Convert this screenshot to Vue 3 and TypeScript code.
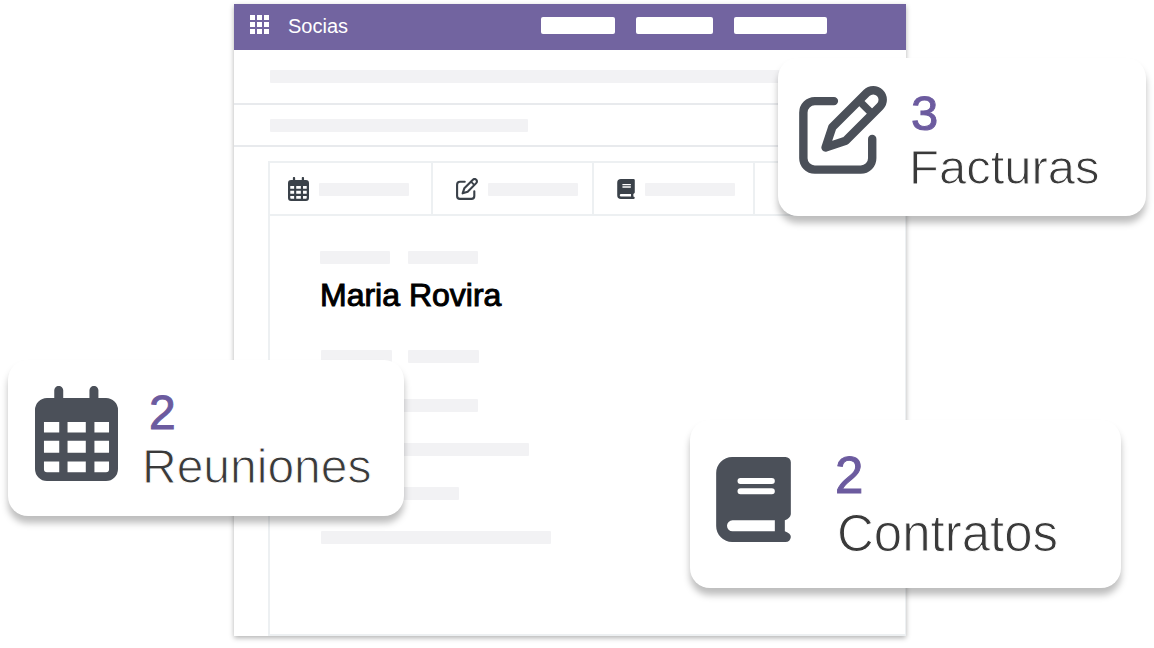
<script setup lang="ts">
import { h, type FunctionalComponent } from 'vue'

type IconName = 'calendar' | 'edit' | 'book'

interface Summary {
  key: string
  icon: IconName
  count: number
  label: string
}

const summaries: Summary[] = [
  { key: 'invoices', icon: 'edit', count: 3, label: 'Facturas' },
  { key: 'meetings', icon: 'calendar', count: 2, label: 'Reuniones' },
  { key: 'contracts', icon: 'book', count: 2, label: 'Contratos' },
]

const tabs: { icon: IconName; label: string }[] = [
  { icon: 'calendar', label: 'Reuniones' },
  { icon: 'edit', label: 'Facturas' },
  { icon: 'book', label: 'Contratos' },
]

const Icon: FunctionalComponent<{ name: IconName }> = ({ name }) => {
  if (name === 'calendar') {
    return h('svg', { viewBox: '0 0 250 286', fill: 'currentColor', 'aria-hidden': 'true' }, [
      h('path', {
        'fill-rule': 'evenodd',
        d:
          'M58 36V13a13.5 13.5 0 0 1 27 0V36H164V13a13.5 13.5 0 0 1 27 0V36H214a36 36 0 0 1 36 36V250a36 36 0 0 1-36 36H36a36 36 0 0 1-36-36V72a36 36 0 0 1 36-36Z' +
          'M27 108H73V140H27ZM98 108H153V140H98ZM179 108H223V140H179Z' +
          'M27 165H73V201H27ZM98 165H153V201H98ZM179 165H223V201H179Z' +
          'M27 227H73V260H36a9 9 0 0 1-9-9ZM98 227H153V260H98ZM179 227H223V251a9 9 0 0 1-9 9H179Z',
      }),
    ])
  }
  if (name === 'edit') {
    return h(
      'svg',
      {
        viewBox: '0 0 262 262',
        fill: 'none',
        stroke: 'currentColor',
        'stroke-width': 25,
        'stroke-linecap': 'round',
        'stroke-linejoin': 'round',
        'aria-hidden': 'true',
      },
      [
        h('path', { d: 'M104 45H47a34 34 0 0 0-34 34V215a34 34 0 0 0 34 34H184a34 34 0 0 0 34-34V158' }),
        h('path', { d: 'M79 183L99 123L201 21A28 28 0 0 1 241 61L139 163Z' }),
        h('path', { 'stroke-linecap': 'butt', 'stroke-width': 22, d: 'M179 44L219 84' }),
      ],
    )
  }
  return h('svg', { viewBox: '0 0 224 255', fill: 'currentColor', 'aria-hidden': 'true' }, [
    h('path', {
      'fill-rule': 'evenodd',
      d:
        'M48 0H208a16 16 0 0 1 16 16V172Q222 184 206 190V223Q224 230 224 240Q222 255 208 255H48a48 48 0 0 1-48-48V48a48 48 0 0 1 48-48Z' +
        'M73 63a9 9 0 0 0 0 18H167a9 9 0 0 0 0-18ZM73 94a9 9 0 0 0 0 18H167a9 9 0 0 0 0-18Z' +
        'M49 190a16 16 0 0 0 0 33H176V190Z',
    }),
  ])
}
Icon.props = ['name']
</script>

<template>
  <div class="stage">
    <main class="window">
      <header class="topbar">
        <button class="apps" type="button" aria-label="Socias">
          <i v-for="n in 9" :key="n"></i>
        </button>
        <span class="brand">Socias</span>
        <nav class="menu">
          <i class="item"></i>
          <i class="item mid"></i>
          <i class="item long"></i>
        </nav>
      </header>

      <div class="strip first"><i class="bar"></i></div>
      <div class="strip second"><i class="bar"></i></div>

      <section class="sheet">
        <div class="tabs">
          <button
            v-for="tab in tabs"
            :key="tab.label"
            type="button"
            class="tab"
            :class="tab.icon"
            :aria-label="tab.label"
          >
            <Icon :name="tab.icon" class="tab-icon" />
            <i class="bar"></i>
          </button>
        </div>
        <div class="record">
          <div class="pair"><i class="bar"></i><i class="bar"></i></div>
          <h1>Maria Rovira</h1>
          <div class="fields">
            <div class="pair"><i class="bar"></i><i class="bar"></i></div>
            <i class="bar w-a"></i>
            <i class="bar w-b"></i>
            <i class="bar w-c"></i>
            <i class="bar w-d"></i>
          </div>
        </div>
      </section>
    </main>

    <article v-for="s in summaries" :key="s.key" class="card" :class="s.key">
      <Icon :name="s.icon" class="card-icon" />
      <div class="card-text">
        <strong>{{ s.count }}</strong>
        <span>{{ s.label }}</span>
      </div>
    </article>
  </div>
</template>

<style>
body {
  background: #fff;
}
</style>

<style scoped>
.stage {
  position: relative;
  box-sizing: border-box;
  display: flex;
  min-height: 100vh;
  padding: 4px 248px 12px 234px;
  overflow: hidden;
  font-family: 'Liberation Sans', Arial, sans-serif;
}

.window {
  flex: 1;
  min-width: 0;
  display: flex;
  flex-direction: column;
  background: #fff;
  box-shadow: 0 2px 5px rgba(0, 0, 0, 0.3);
}

button {
  border: 0;
  padding: 0;
  background: none;
  font: inherit;
}

.topbar {
  display: flex;
  align-items: center;
  height: 46px;
  padding: 0 79px 0 16px;
  background: #7264a0;
  color: #fff;
}

.apps {
  display: grid;
  grid-template-columns: repeat(3, 5px);
  grid-auto-rows: 5px;
  gap: 2px;
  margin: 0 19px 5px 0;
}

.apps i {
  background: #fff;
}

.brand {
  font-size: 20px;
  line-height: 24px;
  margin-bottom: 2px;
}

.menu {
  display: flex;
  gap: 21px;
  margin-left: auto;
  margin-bottom: 3px;
}

.item {
  width: 74px;
  height: 17px;
  border-radius: 2px;
  background: #fff;
}

.item.mid {
  width: 77px;
}

.item.long {
  width: 93px;
}

.bar {
  display: block;
  height: 13px;
  border-radius: 1px;
  background: #f2f2f4;
}

.strip {
  border-bottom: 2px solid #e8eaed;
  padding-left: 36px;
}

.first {
  padding-top: 20px;
  padding-bottom: 20px;
  padding-right: 100px;
}

.second {
  padding-top: 14px;
  padding-bottom: 13px;
}

.second .bar {
  width: 258px;
}

.sheet {
  flex: 1;
  display: flex;
  flex-direction: column;
  margin: 14px 0 0 34px;
  border: 2px solid #edf0f2;
  border-right-width: 1px;
}

.tabs {
  display: flex;
  height: 51px;
  border-bottom: 2px solid #edf0f2;
}

.tab {
  box-sizing: border-box;
  display: flex;
  align-items: center;
  gap: 10px;
  width: 161px;
  padding: 1px 0 0 23px;
  border-right: 2px solid #edf0f2;
  color: #3a4149;
}

.tab.calendar {
  width: 163px;
  padding-left: 18px;
}

.tab .bar {
  width: 90px;
}

.tab-icon {
  width: 22px;
  height: 22px;
}

.calendar .tab-icon {
  width: 21px;
  height: 24px;
}

.book .tab-icon {
  width: 18px;
  height: 20px;
}

.record {
  padding: 35px 0 0 50px;
}

.pair {
  display: flex;
  gap: 18px;
}

.pair .bar {
  width: 70px;
}

h1 {
  margin: 13px 0 37px;
  font-size: 32px;
  line-height: 36px;
  font-weight: 400;
  color: #000;
  -webkit-text-stroke: 1px #000;
}

.fields {
  display: grid;
  gap: 31px;
  padding-left: 1px;
}

.fields .pair {
  gap: 16px;
  margin-bottom: 5px;
}

.fields .pair .bar {
  width: 71px;
}

.w-a {
  width: 157px;
}

.w-b {
  width: 208px;
}

.w-c {
  width: 138px;
}

.w-d {
  width: 230px;
}

.card {
  position: absolute;
  box-sizing: border-box;
  display: flex;
  align-items: flex-start;
  border-radius: 20px;
  background: #fff;
  color: #4b5059;
  box-shadow: 0 7px 7px rgba(0, 0, 0, 0.26);
}

.card-text {
  display: flex;
  flex-direction: column;
  font-size: 48px;
  line-height: 54px;
}

.card-text strong {
  font-weight: 400;
  color: #6c5b9f;
  -webkit-text-stroke: 1px #6c5b9f;
}

.card-text span {
  color: #3a3a3a;
  -webkit-text-stroke: 1px #fff;
}

.invoices {
  top: 58px;
  right: 8px;
  width: 368px;
  height: 158px;
  padding: 28px 0 0 21px;
}

.invoices .card-icon {
  width: 88px;
  height: 88px;
  margin-right: 22px;
}

.invoices strong {
  padding-left: 2px;
}

.invoices .card-text {
  font-size: 49px;
}

.meetings {
  top: 360px;
  left: 8px;
  width: 396px;
  height: 156px;
  padding: 26px 0 0 27px;
}

.meetings .card-icon {
  width: 83px;
  height: 95px;
  margin-right: 24px;
}

.meetings strong {
  padding-left: 7px;
}

.contracts {
  top: 420px;
  right: 33px;
  width: 431px;
  height: 168px;
  padding: 27px 0 0 26px;
}

.contracts .card-icon {
  width: 75px;
  height: 85px;
  margin: 10px 44px 0 0;
}

.contracts .card-text {
  font-size: 51px;
  line-height: 58px;
}

.contracts span {
  padding-left: 2px;
}
</style>
